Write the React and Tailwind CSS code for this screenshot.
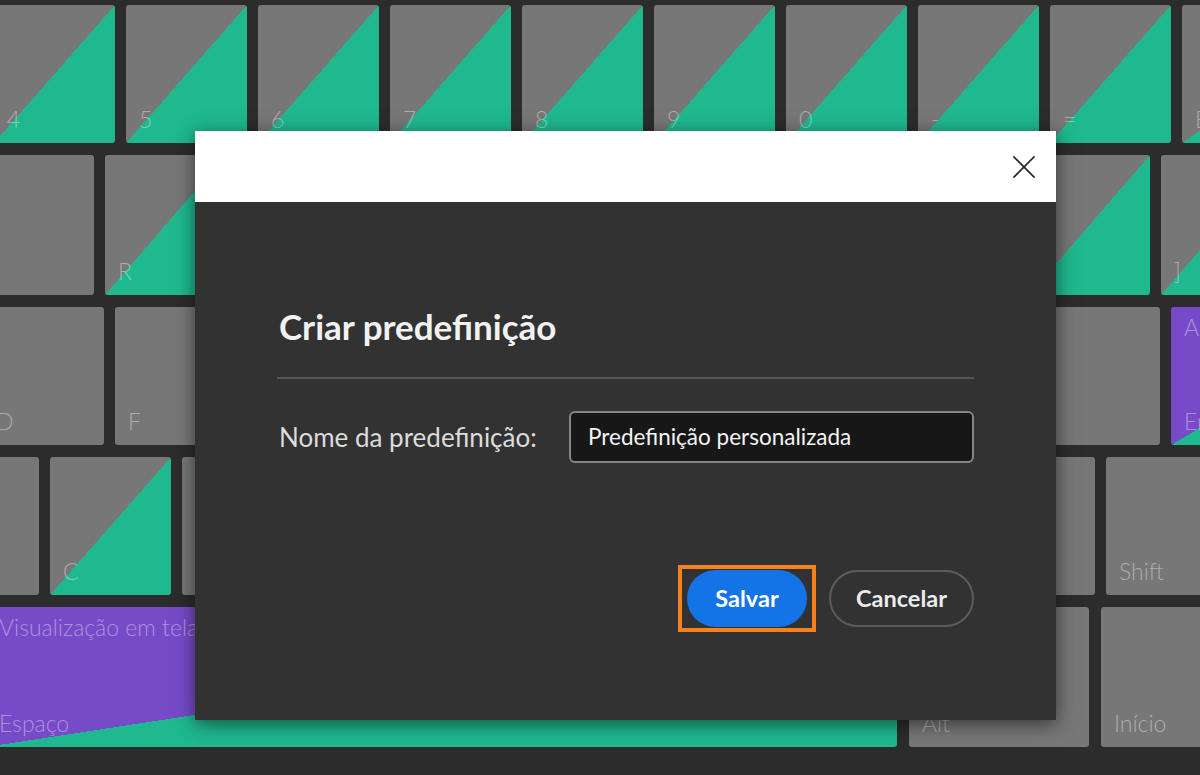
import React from 'react';

const GRAY = 'bg-[#777777]';
const GRAY_TRI = 'bg-[linear-gradient(to_top_left,#1fb88f_50%,#777777_50%)]';
const PURPLE_TRI = 'bg-[linear-gradient(to_top_left,#1fb88f_50%,#774bc8_50%)]';

// keys marked hide sit under the dialog, their labels are never seen
const rows = [
  {
    offset: '-ml-[6px]', h: 'h-[138px]',
    keys: [
      { label: '4', bg: GRAY_TRI }, { label: '5', bg: GRAY_TRI }, { label: '6', bg: GRAY_TRI },
      { label: '7', bg: GRAY_TRI }, { label: '8', bg: GRAY_TRI }, { label: '9', bg: GRAY_TRI },
      { label: '0', bg: GRAY_TRI }, { label: '-', bg: GRAY_TRI }, { label: '=', bg: GRAY_TRI },
      { label: 'Backspace', bg: GRAY_TRI, w: 'w-[200px]' },
    ],
  },
  {
    offset: '-ml-[27px]', h: 'h-[140px]',
    keys: [
      { label: 'E', bg: GRAY, hide: true }, { label: 'R', bg: GRAY_TRI }, { label: 'T', bg: GRAY_TRI, hide: true },
      { label: 'Y', bg: GRAY, hide: true }, { label: 'U', bg: GRAY_TRI, hide: true }, { label: 'I', bg: GRAY, hide: true },
      { label: 'O', bg: GRAY_TRI, hide: true }, { label: 'P', bg: GRAY, hide: true }, { label: '[', bg: GRAY_TRI, hide: true },
      { label: ']', bg: GRAY_TRI },
    ],
  },
  {
    offset: '-ml-[17px]', h: 'h-[138px]',
    keys: [
      { label: 'D', bg: GRAY }, { label: 'F', bg: GRAY }, { label: 'G', bg: GRAY_TRI, hide: true },
      { label: 'H', bg: GRAY, hide: true }, { label: 'J', bg: GRAY_TRI, hide: true }, { label: 'K', bg: GRAY, hide: true },
      { label: 'L', bg: GRAY, hide: true }, { label: ';', bg: GRAY, hide: true }, { label: "'", bg: GRAY, hide: true },
      { label: 'Enter', top: 'Aplicar', bg: PURPLE_TRI, w: 'w-[230px]' },
    ],
  },
  {
    offset: '-ml-[82px]', h: 'h-[138px]',
    keys: [
      { label: 'X', bg: GRAY, hide: true }, { label: 'C', bg: GRAY_TRI }, { label: 'V', bg: GRAY, hide: true },
      { label: 'B', bg: GRAY_TRI, hide: true }, { label: 'N', bg: GRAY, hide: true }, { label: 'M', bg: GRAY, hide: true },
      { label: ',', bg: GRAY_TRI, hide: true }, { label: '.', bg: GRAY, hide: true }, { label: '/', bg: GRAY, hide: true },
      { label: 'Shift', bg: GRAY, w: 'w-[200px]' },
    ],
  },
  {
    offset: '-ml-[14px]', h: 'h-[140px]', gap: 'gap-[12px]',
    keys: [
      { label: 'Espaço', top: 'Visualização em tela cheia', bg: PURPLE_TRI, w: 'w-[911px]' },
      { label: 'Alt', bg: GRAY, w: 'w-[180px]' },
      { label: 'Início', bg: GRAY, w: 'w-[140px]' },
    ],
  },
];

function Key({ k, h }) {
  return (
    <div
      className={`${k.w || 'w-[121px]'} ${h} ${k.bg} shrink-0 rounded-[3px] flex flex-col ${k.top ? 'justify-between pt-[9px]' : 'justify-end'} pl-[13px] pb-[12px] text-[23px] font-light leading-none text-white/40 whitespace-nowrap overflow-hidden`}
    >
      {k.top && <span>{k.top}</span>}
      <span>{k.hide ? '' : k.label}</span>
    </div>
  );
}

function CloseIcon() {
  return (
    <svg width="24" height="24" viewBox="0 0 24 24" fill="none" stroke="#262626" strokeWidth="1.7" strokeLinecap="square">
      <line x1="2" y1="2" x2="22" y2="22" />
      <line x1="22" y1="2" x2="2" y2="22" />
    </svg>
  );
}

export default function App() {
  return (
    <div className="relative w-[1200px] h-[775px] overflow-hidden bg-[#2c2c2c] font-['Lato',sans-serif]">
      {/* Keyboard behind the dialog */}
      <div className="flex flex-col gap-[12px] pt-[5px]">
        {rows.map((row, i) => (
          <div key={i} className={`flex ${row.gap || 'gap-[11px]'} ${row.offset}`}>
            {row.keys.map((k, j) => <Key key={j} k={k} h={row.h} />)}
          </div>
        ))}
      </div>

      {/* Dialog */}
      <div className="absolute left-[195px] top-[131px] w-[861px] h-[589px] bg-[#323232] shadow-[0_4px_18px_rgba(0,0,0,0.55)] flex flex-col">
        <div className="h-[71px] bg-white flex items-center justify-end pr-[20px]">
          <CloseIcon />
        </div>

        <div className="flex flex-col px-[82px] pt-[104px]">
          <h2 className="pl-[2px] text-[35px] leading-[40px] font-bold text-[#f2f2f2]">Criar predefinição</h2>
          <div className="mt-[31px] h-[2px] bg-[#555555]" />

          <div className="mt-[32px] flex items-center">
            <label className="pl-[2px] w-[292px] text-[26px] text-[#dcdcdc]">Nome da predefinição:</label>
            <div className="flex-1 h-[52px] rounded-[6px] border-2 border-[#858585] bg-[#171717] flex items-center pl-[17px] text-[22.5px] text-[#f4f4f4]">
              Predefinição personalizada
            </div>
          </div>

          <div className="mt-[102px] flex items-center justify-end gap-[13px]">
            <div className="border-4 border-[#f5821f] px-[5px] py-[1px]">
              <button className="w-[120px] h-[57px] rounded-full bg-[#1473e6] text-white text-[23.5px] font-bold">
                Salvar
              </button>
            </div>
            <button className="w-[145px] h-[57px] rounded-full border-2 border-[#5c5c5c] text-[#ececec] text-[23.5px] font-bold">
              Cancelar
            </button>
          </div>
        </div>
      </div>
    </div>
  );
}
